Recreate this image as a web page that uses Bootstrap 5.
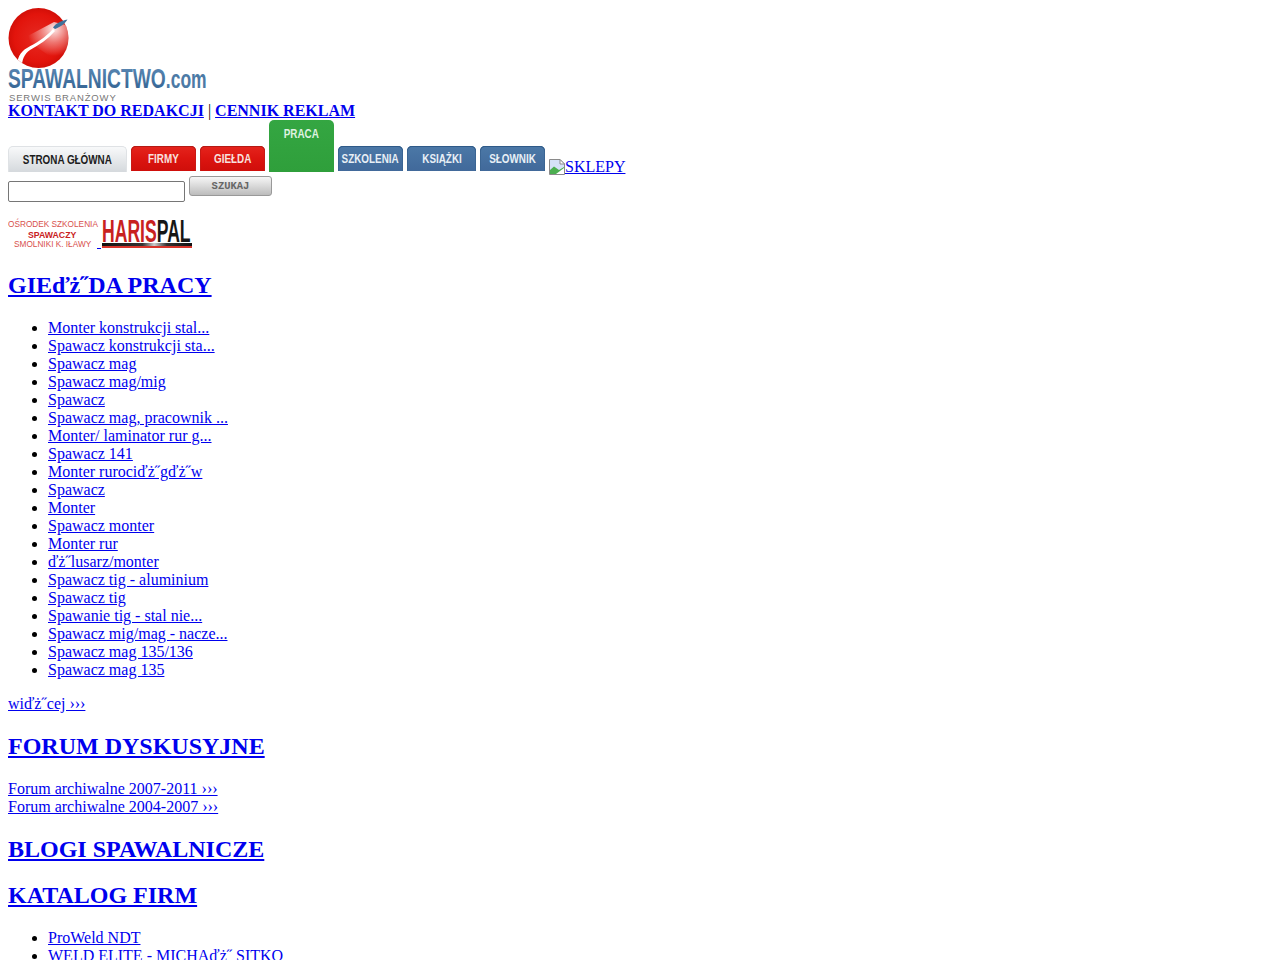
<!DOCTYPE html>
<html lang="pl">
<head>
<meta charset="utf-8">
<title>Spawalnictwo</title>
<link href="https://cdn.jsdelivr.net/npm/bootstrap@5.3.0/dist/css/bootstrap.min.css" rel="stylesheet">
<style>
html,body{height:auto}
body{margin:8px;font:16px/18px "Liberation Serif","Times New Roman",serif;color:#000;background:#fff}
a{color:#00e;text-decoration:underline}
a:hover{color:#00e}
h2.sec{font:bold 24px/27px "Liberation Serif",serif;margin:19.92px 0}
ul.plain{margin:16px 0;padding-left:40px;list-style:disc}
.logo{display:block;width:200px;height:94px;text-decoration:none}
.logo svg{display:block;overflow:visible}
.logo text,.ad svg text{font-family:"Liberation Sans",sans-serif}
.menu{height:52px;display:flex;align-items:flex-end}
.tab{display:inline-flex;align-items:center;justify-content:center;font:bold 12.500px/1 "Liberation Sans",sans-serif;border-radius:5px 5px 0 0;color:#fff;text-decoration:none;height:25px;margin-right:4px;padding-top:1px}
.tab span{display:inline-block;transform:scaleX(.79);white-space:nowrap}
.t-home{width:119px;height:26px;color:#1c1c1c;background:linear-gradient(#f8f9fa,#d5d9dd);border:1px solid #dfe2e5;border-bottom:0}
.t-red{width:65px;height:25px;margin-bottom:1px;color:#f8e0df;background:linear-gradient(#e5241d 0,#dc1510 50%,#cf0e0a 100%);box-shadow:inset 0 1px #b51a15,inset 1px 0 #c91a15,inset -1px 0 #c91a15}
.t-green{width:65px;height:52px;color:#dff2e0;background:linear-gradient(#34a642,#2f9f3b);align-items:flex-start;padding-top:8px}
.t-blue{height:25px;color:#e8eff6;background:linear-gradient(#4b78a7,#41699a);box-shadow:inset 0 1px #2f5a88,inset 1px 0 #3b6593,inset -1px 0 #3b6593;margin-bottom:1px}
.t-b1{width:65px}.t-b2{width:69px}.t-b3{width:65px}
.shop{display:inline-flex;align-items:flex-end;margin-bottom:-4px;line-height:18px}
.shop svg{display:block;width:16px;height:16px;margin-bottom:1px}
.searchrow{display:flex;align-items:flex-start;gap:4px;margin-top:4px;height:26px}
.qbox{width:177px;height:21px;margin-top:5px;border:1px solid #767676;border-radius:2px;background:#fff;padding:1px 2px;font-size:13px}
.gobtn{width:83px;height:20px;border:1px solid #999;border-radius:3px;background:linear-gradient(#f6f6f6,#bcbcbc);color:#666;font:bold 10.500px/19px "Liberation Mono",monospace;padding:0}
.ad{height:34px;padding-bottom:4px;margin-top:16px;display:flex;align-items:flex-end}
.ad-a{width:89px;height:30px;display:block;text-decoration:none}
.ad-gap{width:4px;display:block;height:1px;background:#00e;margin-bottom:-1px}
.ad-b{width:91px;height:30px;display:block;text-decoration:none}
.ad svg{display:block;overflow:visible}
</style>
</head>
<body>
<a class="logo" href="#" aria-label="Spawalnictwo.com">
<svg width="200" height="94" viewBox="0 0 200 94" xmlns="http://www.w3.org/2000/svg">
<defs>
<radialGradient id="ball" cx=".5" cy=".5" r=".5"><stop offset="0" stop-color="#e62a22"/><stop offset=".8" stop-color="#e2140c"/><stop offset="1" stop-color="#d20f08"/></radialGradient>
<radialGradient id="glow" gradientUnits="userSpaceOnUse" cx="46" cy="21" r="27"><stop offset="0" stop-color="#fff" stop-opacity=".9"/><stop offset=".5" stop-color="#fff" stop-opacity=".4"/><stop offset="1" stop-color="#fff" stop-opacity="0"/></radialGradient>
<linearGradient id="logot" x1="0" y1="0" x2="0" y2="1"><stop offset="0" stop-color="#5f8cb7"/><stop offset="1" stop-color="#2f5f8f"/></linearGradient>
<clipPath id="ballclip"><circle cx="30.500" cy="30" r="30"/></clipPath>
</defs>
<circle cx="30.500" cy="30" r="30" fill="url(#ball)"/>
<g clip-path="url(#ballclip)">
<path d="M16 30L46 14L70 20V44L44 50Z" fill="url(#glow)"/>
<path d="M9 60C9 50 12 44 19 40C28 35 37 30 45 21L47 23C40 31 31 37 22 42C16 46 14 52 13.500 61Z" fill="#fff"/>
</g>
<path d="M45 19.500C48 15 53 13 59.500 11.500C57 16 52 19 47 21Z" fill="#3f7199"/>
<text transform="translate(0 80) scale(.7 1)" font-weight="700"><tspan font-size="27.500" fill="url(#logot)">SPAWALNICTWO</tspan><tspan font-size="25" fill="#4c7aa6">.com</tspan></text>
<text x="1" y="93" font-size="9.500" fill="#777" letter-spacing=".85">SERWIS BRANŻOWY</text>
</svg>
</a>
<div><a href="#" class="fw-bold">KONTAKT DO REDAKCJI</a> | <a href="#" class="fw-bold">CENNIK REKLAM</a></div>
<div class="menu">
<a href="#" class="tab t-home"><span>STRONA GŁÓWNA</span></a>
<a href="#" class="tab t-red"><span>FIRMY</span></a>
<a href="#" class="tab t-red"><span>GIEŁDA</span></a>
<a href="#" class="tab t-green"><span>PRACA</span></a>
<a href="#" class="tab t-blue t-b1"><span>SZKOLENIA</span></a>
<a href="#" class="tab t-blue t-b2"><span>KSIĄŻKI</span></a>
<a href="#" class="tab t-blue t-b3"><span>SŁOWNIK</span></a>
<a href="#" class="shop"><svg viewBox="0 0 16 16" xmlns="http://www.w3.org/2000/svg"><path d="M.5.500H11L15.500 5V15.500H.5Z" fill="#d5e2f8" stroke="#8a8a8a"/><path d="M1 15V11L5 7.500L10 11L15 8V15Z" fill="#4caf50"/><path d="M7 15L15 9V15Z" fill="#fff"/><path d="M11 .5V5H15.500Z" fill="#fff" stroke="#8a8a8a"/></svg>SKLEPY</a>
</div>
<form class="searchrow" onsubmit="return false"><input class="qbox" type="text" aria-label="Szukaj"><button class="gobtn" type="button">SZUKAJ</button></form>
<div class="ad">
<a class="ad-a" href="#"><svg width="89" height="30" viewBox="0 0 89 30" xmlns="http://www.w3.org/2000/svg">
<text transform="translate(0 9) scale(.87 1)" font-size="9.500" fill="#d8504c">OŚRODEK SZKOLENIA</text>
<text transform="translate(20 19.500) scale(.92 1)" font-size="9.500" font-weight="700" fill="#c9211d">SPAWACZY</text>
<text transform="translate(6 29) scale(.87 1)" font-size="9.500" fill="#d8504c">SMOLNIKI K. IŁAWY</text>
</svg></a><a class="ad-gap" href="#" aria-hidden="true"></a><a class="ad-b" href="#"><svg width="91" height="30" viewBox="0 0 91 30" xmlns="http://www.w3.org/2000/svg">
<defs><linearGradient id="barg" x1="0" x2="1" y1="0" y2="0"><stop offset="0" stop-color="#111"/><stop offset=".45" stop-color="#333"/><stop offset=".58" stop-color="#ccc"/><stop offset=".72" stop-color="#333"/><stop offset="1" stop-color="#111"/></linearGradient></defs>
<text transform="translate(1 23.500) scale(.55 1)" font-size="32" font-weight="700"><tspan fill="#c8211f">HARIS</tspan><tspan fill="#161616">PAL</tspan></text>
<rect x="1" y="25" width="90" height="3" fill="url(#barg)"/><rect x="1" y="28" width="90" height="2" fill="#d8352c"/>
</svg></a>
</div>
<h2 class="sec"><a href="#">GIEďż˝DA PRACY</a></h2>
<ul class="plain">
<li><a href="#">Monter konstrukcji stal...</a></li>
<li><a href="#">Spawacz konstrukcji sta...</a></li>
<li><a href="#">Spawacz mag</a></li>
<li><a href="#">Spawacz mag/mig</a></li>
<li><a href="#">Spawacz</a></li>
<li><a href="#">Spawacz mag, pracownik ...</a></li>
<li><a href="#">Monter/ laminator rur g...</a></li>
<li><a href="#">Spawacz 141</a></li>
<li><a href="#">Monter rurociďż˝gďż˝w</a></li>
<li><a href="#">Spawacz</a></li>
<li><a href="#">Monter</a></li>
<li><a href="#">Spawacz monter</a></li>
<li><a href="#">Monter rur</a></li>
<li><a href="#">ďż˝lusarz/monter</a></li>
<li><a href="#">Spawacz tig - aluminium</a></li>
<li><a href="#">Spawacz tig</a></li>
<li><a href="#">Spawanie tig - stal nie...</a></li>
<li><a href="#">Spawacz mig/mag - nacze...</a></li>
<li><a href="#">Spawacz mag 135/136</a></li>
<li><a href="#">Spawacz mag 135</a></li>
</ul>
<div><a href="#">wiďż˝cej ›››</a></div>
<h2 class="sec"><a href="#">FORUM DYSKUSYJNE</a></h2>
<div><a href="#">Forum archiwalne 2007-2011 ›››</a></div>
<div><a href="#">Forum archiwalne 2004-2007 ›››</a></div>
<h2 class="sec"><a href="#">BLOGI SPAWALNICZE</a></h2>
<h2 class="sec"><a href="#">KATALOG FIRM</a></h2>
<ul class="plain">
<li><a href="#">ProWeld NDT</a></li>
<li><a href="#">WELD ELITE - MICHAďż˝ SITKO</a></li>
</ul>
</body>
</html>
